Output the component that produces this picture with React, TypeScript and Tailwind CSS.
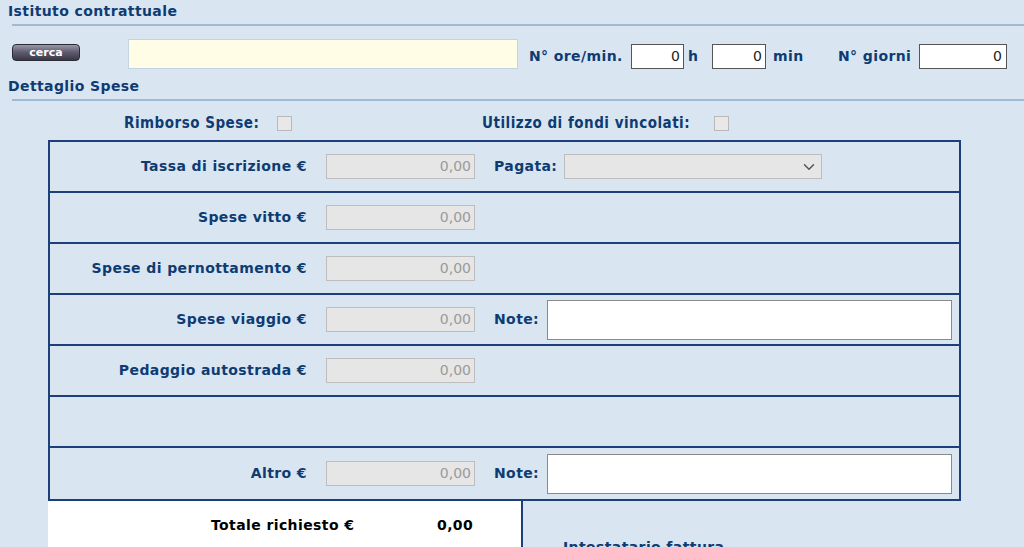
import { ChevronDown } from "lucide-react";

const rows = [
  { label: "Tassa di iscrizione €", extra: "pagata" },
  { label: "Spese vitto €", extra: "" },
  { label: "Spese di pernottamento €", extra: "" },
  { label: "Spese viaggio €", extra: "note" },
  { label: "Pedaggio autostrada €", extra: "" },
  { label: "", extra: "blank" },
  { label: "Altro €", extra: "note" },
];

const lbl = "text-[14px] tracking-[0.4px] font-bold text-[#0f3b73]";
const cond = "text-[15px] tracking-[0.5px] font-bold text-[#0f3b73] font-['DejaVu_Sans_Condensed',sans-serif]";

function Amount() {
  return (
    <div className="w-[149px] h-[25px] bg-[#e6e6e6] border border-[#bdbdbd] flex items-center justify-end pr-[3px] text-[14px] text-[#9a9a9a]">
      0,00
    </div>
  );
}

function Row({ label, extra }: { label: string; extra: string }) {
  return (
    <div className="h-[51px] flex items-center border-b-2 border-[#1d3f7a] last:border-b-0">
      <div className={`w-[257px] text-right ${lbl}`}>{label}</div>
      {extra !== "blank" && (
        <div className="ml-[19px]">
          <Amount />
        </div>
      )}
      {extra === "pagata" && (
        <div className="flex items-center">
          <span className={`ml-[19px] w-[70px] ${lbl}`}>Pagata:</span>
          <div className="w-[258px] h-[25px] bg-[#e6e6e6] border border-[#bdbdbd] flex items-center justify-end pr-[3px]">
            <ChevronDown className="w-[18px] h-[18px] text-[#555]" strokeWidth={2} />
          </div>
        </div>
      )}
      {extra === "note" && (
        <div className="flex items-center">
          <span className={`ml-[19px] w-[53px] ${lbl}`}>Note:</span>
          <div className="w-[405px] h-[40px] bg-white border border-[#8a8a8a]" />
        </div>
      )}
    </div>
  );
}

export default function App() {
  return (
    <div className="w-[1024px] h-[547px] overflow-hidden bg-[#d9e6f1] font-['DejaVu_Sans',sans-serif]">
      {/*Istituto contrattuale*/}
      <div className={`pl-[8px] pt-[1px] h-[24px] ${lbl}`}>Istituto contrattuale</div>
      <div className="ml-[12px] h-[2px] bg-[#9dbbd5]" />
      <div className="flex items-start h-[50px]">
        <button className="ml-[12px] mt-[18px] w-[68px] h-[17px] rounded-[4px] border border-[#2b2b33] bg-gradient-to-b from-[#9a98a8] via-[#5c5a6c] to-[#3a3848] text-white text-[11px] font-bold leading-none flex items-center justify-center">
          cerca
        </button>
        <div className="ml-[48px] mt-[13px] w-[390px] h-[30px] bg-[#fffde6] border border-[#c3d3e2]" />
        <div className="flex items-center mt-[18px] h-[25px]">
          <span className={`ml-[11px] w-[102px] ${lbl}`}>N° ore/min.</span>
          <div className="w-[53px] h-[25px] bg-white border border-[#555] flex items-center justify-end pr-[3px] text-[14px] text-[#222]">0</div>
          <span className={`ml-[4px] w-[24px] ${lbl}`}>h</span>
          <div className="w-[54px] h-[25px] bg-white border border-[#555] flex items-center justify-end pr-[3px] text-[14px] text-[#222]">0</div>
          <span className={`ml-[7px] w-[65px] ${lbl}`}>min</span>
          <span className={`w-[81px] ${lbl}`}>N° giorni</span>
          <div className="w-[88px] h-[25px] bg-white border border-[#555] flex items-center justify-end pr-[4px] text-[14px] text-[#222]">0</div>
        </div>
      </div>

      {/*Dettaglio spese*/}
      <div className={`pl-[8px] h-[23px] ${lbl}`}>Dettaglio Spese</div>
      <div className="ml-[12px] h-[2px] bg-[#9dbbd5]" />
      <div className="flex items-center h-[39px] pt-[6px]">
        <span className={`ml-[124px] w-[153px] ${cond}`}>Rimborso Spese:</span>
        <div className="w-[15px] h-[15px] bg-[#e8e8e8] border border-[#b8b8b8]" />
        <span className={`ml-[190px] w-[232px] ${cond}`}>Utilizzo di fondi vincolati:</span>
        <div className="w-[15px] h-[15px] bg-[#e8e8e8] border border-[#b8b8b8]" />
      </div>

      {/*Tabella*/}
      <div className="ml-[48px] w-[913px] border-2 border-[#1d3f7a]">
        {rows.map((r, i) => (
          <Row key={i} label={r.label} extra={r.extra} />
        ))}
      </div>
      <div className="flex">
        <div className="ml-[48px] w-[475px] h-[60px] bg-white border-r-2 border-[#1d3f7a] flex items-start pt-[14px]">
          <span className="ml-[163px] w-[226px] text-[14px] tracking-[0.4px] font-bold text-black">Totale richiesto €</span>
          <span className="text-[14px] tracking-[0.4px] font-bold text-black">0,00</span>
        </div>
        <div className={`ml-[40px] pt-[36px] ${lbl}`}>Intestatario fattura</div>
      </div>
    </div>
  );
}
